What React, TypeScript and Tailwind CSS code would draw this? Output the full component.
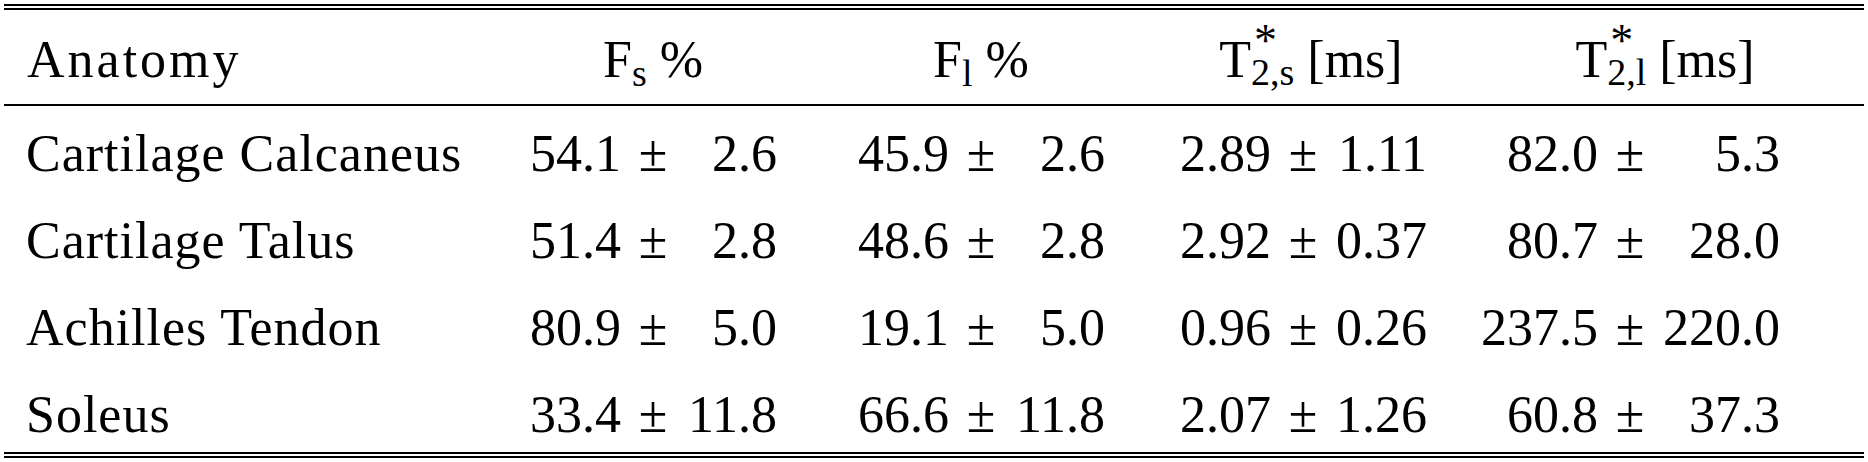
import React from "react";

type Cell = [string, string];
type Row = { name: string; cells: Cell[] };

const rows: Row[] = [
  { name: "Cartilage Calcaneus", cells: [["54.1", "2.6"], ["45.9", "2.6"], ["2.89", "1.11"], ["82.0", "5.3"]] },
  { name: "Cartilage Talus", cells: [["51.4", "2.8"], ["48.6", "2.8"], ["2.92", "0.37"], ["80.7", "28.0"]] },
  { name: "Achilles Tendon", cells: [["80.9", "5.0"], ["19.1", "5.0"], ["0.96", "0.26"], ["237.5", "220.0"]] },
  { name: "Soleus", cells: [["33.4", "11.8"], ["66.6", "11.8"], ["2.07", "1.26"], ["60.8", "37.3"]] },
];

function PM({ mean, sd, wide }: { mean: string; sd: string; wide?: boolean }) {
  return (
    <div className="flex">
      <span className={wide ? "w-[118px] text-right" : "w-[92px] text-right"}>{mean}</span>
      <span className="w-[64px] text-center">±</span>
      <span className={wide ? "w-[118px] text-right" : "w-[92px] text-right"}>{sd}</span>
    </div>
  );
}

function Sub({ children }: { children: React.ReactNode }) {
  return <span className="relative top-[9px] text-[38px] leading-none">{children}</span>;
}

function TStar({ sub }: { sub: string }) {
  return (
    <span className="inline-flex items-baseline">
      <span>T</span>
      <span className="inline-flex flex-col items-start">
        <span className="relative top-[-21px] h-[10px] pl-[3px] text-[46px] leading-[10px]">*</span>
        <span className="relative top-[-3px] h-[16px] text-[38px] leading-[16px]">{sub}</span>
      </span>
    </span>
  );
}

function Rule() {
  return <div className="h-[2px] bg-black" />;
}

export default function App() {
  return (
    <div className="w-[1868px] h-[462px] bg-white px-[4px] pt-[4px] text-black [font-family:'Liberation_Serif',serif] text-[52px] leading-[52px]">
      <Rule />
      <div className="mt-[2px]">
        <Rule />
      </div>
      <div className="flex h-[94px] pt-[24px] whitespace-nowrap">
        <div className="w-[525px] pl-[23px] tracking-[3px]">Anatomy</div>
        <div className="w-[248px] text-center">
          F<Sub>s</Sub> %
        </div>
        <div className="ml-[80px] w-[248px] text-center">
          F<Sub>l</Sub> %
        </div>
        <div className="ml-[74px] w-[248px] pl-[16px] text-center">
          <TStar sub="2,s" /> [ms]
        </div>
        <div className="ml-[53px] w-[300px] pl-[70px] text-center">
          <TStar sub="2,l" /> [ms]
        </div>
      </div>
      <Rule />
      <div className="flex flex-col">
        {rows.map((r, i) => (
          <div
            key={r.name}
            className={
              i === rows.length - 1
                ? "flex h-[85px] pt-[22px] whitespace-nowrap"
                : "flex h-[87px] pt-[22px] whitespace-nowrap"
            }
          >
            <div className="w-[525px] pl-[22px] tracking-[1px]">{r.name}</div>
            <div className="w-[248px]">
              <PM mean={r.cells[0][0]} sd={r.cells[0][1]} />
            </div>
            <div className="ml-[80px] w-[248px]">
              <PM mean={r.cells[1][0]} sd={r.cells[1][1]} />
            </div>
            <div className="ml-[74px] w-[248px]">
              <PM mean={r.cells[2][0]} sd={r.cells[2][1]} />
            </div>
            <div className="ml-[53px] w-[300px]">
              <PM mean={r.cells[3][0]} sd={r.cells[3][1]} wide />
            </div>
          </div>
        ))}
      </div>
      <Rule />
      <div className="mt-[2px]">
        <Rule />
      </div>
    </div>
  );
}
